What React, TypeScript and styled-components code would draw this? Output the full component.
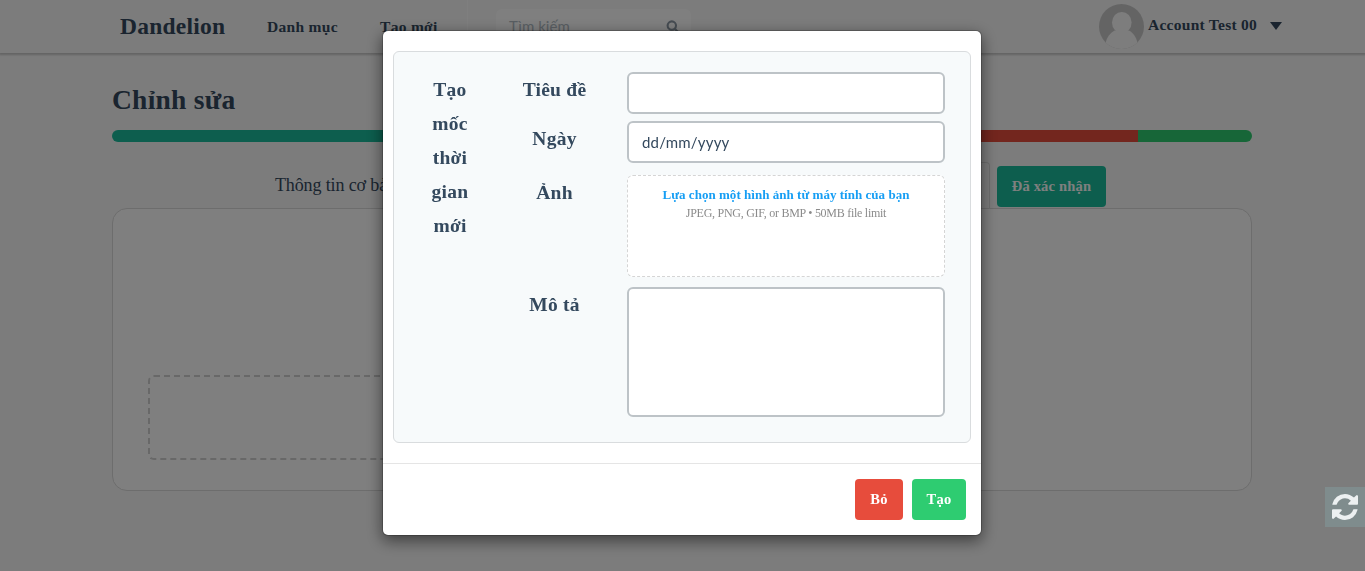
import React from "react";
import styled, { createGlobalStyle } from "styled-components";

const Global = createGlobalStyle`
  * { box-sizing: border-box; }
  html, body { margin: 0; height: 100%; overflow: hidden; }
  body {
    background: #f9f9f9;
    color: #34495e;
    font-family: "Liberation Serif", "Times New Roman", serif;
    font-size: 18px;
    line-height: 31px;
  }
`;

const Page = styled.div`
  height: 571px;
  overflow: hidden;
`;

const Navbar = styled.nav`
  height: 53px;
  background: #f8f8f8;
  box-shadow: 0 1px 2px 1px rgba(0, 0, 0, 0.2);
  display: flex;
  padding-left: 120px;
  padding-right: 83px;
  font-weight: bold;
`;

const Brand = styled.div`
  width: 147px;
  font-size: 23.5px;
  line-height: 53px;
  letter-spacing: 0.25px;
`;

const NavItem = styled.div<{ $width: number }>`
  width: ${(p) => p.$width}px;
  font-size: 15.5px;
  line-height: 54px;
  letter-spacing: 0.3px;
  white-space: nowrap;
`;

const SearchSlot = styled.div`
  border-left: 1px solid #fff;
  padding: 9px 0 0 29px;
  flex: 1;
`;

const SearchBox = styled.div`
  width: 195px;
  height: 35px;
  margin-left: -1px;
  border-radius: 6px;
  background: #fff;
  padding: 0 12px 0 13px;
  display: flex;
  align-items: center;
  justify-content: space-between;
  font: 15px/33px Lato, sans-serif;
  letter-spacing: 0.05px;
  color: #b2bcc5;
`;

const Account = styled.div`
  display: flex;
  font-size: 15.5px;
  line-height: 50px;
  letter-spacing: 0.27px;
  padding-top: 4px;
`;

const AccountName = styled.span`
  width: 110px;
  margin: -4px 12px 0 4px;
  white-space: nowrap;
`;

const Caret = styled.span`
  margin-top: 18px;
  width: 12px;
  height: 8px;
  border: 6px solid transparent;
  border-top: 8px solid #34495e;
  border-bottom: 0;
`;

const Container = styled.main`
  width: 1140px;
  margin: 0 0 0 112px;
`;

const Title = styled.h1`
  margin: 0;
  height: 77px;
  padding-top: 27px;
  font-size: 27.5px;
  line-height: 40px;
  letter-spacing: 0.25px;
  font-weight: bold;
`;

const Progress = styled.div`
  display: flex;
  height: 12px;
  border-radius: 32px;
  overflow: hidden;
`;

const Segment = styled.div<{ $color: string; $width: number }>`
  width: ${(p) => p.$width}px;
  background: ${(p) => p.$color};
`;

const Tabs = styled.div`
  height: 66px;
  padding: 20px 146px 0 149px;
  display: flex;
  justify-content: flex-end;
`;

const Tab = styled.div<{ $active?: boolean }>`
  flex: 1;
  height: 47px;
  padding: 7px 13px;
  border: 1px solid ${(p) => (p.$active ? "#ddd" : "transparent")};
  border-bottom: 0;
  border-radius: 4px 4px 0 0;
  font-size: 18px;
  letter-spacing: -0.13px;
`;

const Button = styled.button<{ $color: string; $width: number }>`
  width: ${(p) => p.$width}px;
  height: 41px;
  padding: 0;
  border: 0;
  border-radius: 4px;
  background: ${(p) => p.$color};
  color: #fff;
  font: bold 14.5px/21px "Liberation Serif", serif;
  letter-spacing: 0.2px;
`;

const TabAction = styled.div`
  margin: 4px 0 0 7px;
  line-height: 0;
`;

const Card = styled.section`
  height: 283px;
  border: 1px solid #dadada;
  border-radius: 15px;
  background: #fff;
  padding: 166px 35px 0;
`;

const DropZone = styled.div`
  width: 534px;
  height: 85px;
  border: 2px dashed #d0d0d0;
  border-radius: 6px;
`;

const Backdrop = styled.div`
  position: fixed;
  inset: 0;
  background: rgba(0, 0, 0, 0.5);
`;

const Modal = styled.div`
  width: 600px;
  margin: 30px 0 0 382px;
  background: #fff;
  background-clip: padding-box;
  border: 1px solid rgba(0, 0, 0, 0.2);
  border-radius: 6px;
  box-shadow: 0 5px 15px rgba(0, 0, 0, 0.5);
`;

const ModalBody = styled.div`
  padding: 20px 10px;
`;

const Panel = styled.div`
  height: 392px;
  border: 1px solid #d9dcde;
  border-radius: 6px;
  background: #f7fafb;
  padding: 20px 25px;
  display: grid;
  grid-template-columns: 64px 144px 318px;
  font-size: 19.5px;
  font-weight: bold;
  line-height: 34px;
  letter-spacing: 0.25px;
  text-align: center;
`;

const PanelTitle = styled.div`
  padding: 1px 11px 0 9px;
`;

const Fields = styled.div`
  grid-column: 2 / 4;
`;

const Row = styled.div<{ $gap: number }>`
  display: grid;
  grid-template-columns: 144px 318px;
  margin-bottom: ${(p) => p.$gap}px;
`;

const Label = styled.label`
  padding: 1px 1px 0 0;
`;

const Input = styled.div<{ $height: number }>`
  height: ${(p) => p.$height}px;
  border: 2px solid #bdc3c7;
  border-radius: 6px;
  background: #fff;
  padding: 0 13px;
  text-align: left;
  font: 15px/38px Lato, sans-serif;
  letter-spacing: 0.2px;
`;

const Upload = styled.div`
  height: 102px;
  border: 1px dashed #d5d5d5;
  border-radius: 6px;
  background: #fff;
  padding-top: 10px;
`;

const UploadTitle = styled.div`
  color: #169ef4;
  font-size: 13px;
  line-height: 18px;
  letter-spacing: 0.03px;
`;

const UploadHint = styled.div`
  color: #8b8b8b;
  font-size: 12px;
  font-weight: normal;
  line-height: 18px;
  letter-spacing: -0.27px;
`;

const ModalFooter = styled.div`
  height: 72px;
  border-top: 1px solid #e5e5e5;
  padding: 15px;
  display: flex;
  justify-content: flex-end;
  gap: 9px;
`;

const Refresh = styled.button`
  position: fixed;
  right: 0;
  top: 487px;
  width: 40px;
  height: 40px;
  padding: 0;
  border: 0;
  background: #7f8c8d;
  color: #ecf0f1;
  display: flex;
  align-items: center;
  justify-content: center;
`;

const Avatar = () => (
  <svg width="45" height="45" viewBox="0 0 45 45">
    <defs>
      <clipPath id="round"><circle cx="22.5" cy="22.5" r="22.5" /></clipPath>
    </defs>
    <g clipPath="url(#round)">
      <rect width="45" height="45" fill="#c9c9c9" />
      <ellipse cx="22.8" cy="18.6" rx="9.8" ry="10.6" fill="#fbfbfb" />
      <path d="M6.500 39C8 33 11 29 15.500 26.500H30C34.500 29 37 33 38.500 39L36 46H9Z" fill="#fbfbfb" />
    </g>
  </svg>
);

const SearchIcon = () => (
  <svg width="13" height="13" viewBox="0 0 13 13" fill="none" stroke="#8c98a4" strokeWidth="2.1">
    <circle cx="5.8" cy="5.6" r="4.2" />
    <path d="M8.600 8.600L12 12" />
  </svg>
);

const RefreshIcon = () => (
  <svg width="26" height="26" viewBox="0 0 1536 1536" fill="currentColor">
    <path d="M1511 928q0 5-1 7-64 268-268 434.500t-478 166.500q-146 0-282.500-55t-243.500-157l-129 129q-19 19-45 19t-45-19-19-45v-448q0-26 19-45t45-19h448q26 0 45 19t19 45-19 45l-137 137q71 66 161 102t187 36q134 0 250-65t186-179q11-17 53-117 8-23 30-23h192q13 0 22.500 9.500t9.500 22.500zm25-800v448q0 26-19 45t-45 19h-448q-26 0-45-19t-19-45 19-45l138-138q-148-137-349-137-134 0-250 65t-186 179q-11 17-53 117-8 23-30 23h-199q-13 0-22.500-9.500t-9.500-22.500v-7q65-268 270-434.500t480-166.500q146 0 284 55.500t245 156.500l130-129q19-19 45-19t45 19 19 45z" />
  </svg>
);

export default function App() {
  return (
    <>
      <Global />
      <Page>
        <Navbar>
          <Brand>Dandelion</Brand>
          <NavItem $width={113}>Danh mục</NavItem>
          <NavItem $width={87}>Tạo mới</NavItem>
          <SearchSlot>
            <SearchBox>Tìm kiếm<SearchIcon /></SearchBox>
          </SearchSlot>
          <Account>
            <Avatar />
            <AccountName>Account Test 00</AccountName>
            <Caret />
          </Account>
        </Navbar>
        <Container>
          <Title>Chỉnh sửa</Title>
          <Progress>
            <Segment $color="#1abc9c" $width={456} />
            <Segment $color="#e74c3c" $width={570} />
            <Segment $color="#2ecc71" $width={114} />
          </Progress>
          <Tabs>
            <Tab>Thông tin cơ bản</Tab>
            <Tab $active />
            <TabAction>
              <Button $color="#1abc9c" $width={109}>Đã xác nhận</Button>
            </TabAction>
          </Tabs>
          <Card><DropZone /></Card>
        </Container>
      </Page>
      <Backdrop>
        <Modal>
          <ModalBody>
            <Panel>
              <PanelTitle>Tạo mốc thời gian mới</PanelTitle>
              <Fields>
                <Row $gap={7}><Label>Tiêu đề</Label><Input $height={42} /></Row>
                <Row $gap={12}><Label>Ngày</Label><Input $height={42}>dd/mm/yyyy</Input></Row>
                <Row $gap={10}>
                  <Label>Ảnh</Label>
                  <Upload>
                    <UploadTitle>Lựa chọn một hình ảnh từ máy tính của bạn</UploadTitle>
                    <UploadHint>JPEG, PNG, GIF, or BMP • 50MB file limit</UploadHint>
                  </Upload>
                </Row>
                <Row $gap={0}><Label>Mô tả</Label><Input $height={130} /></Row>
              </Fields>
            </Panel>
          </ModalBody>
          <ModalFooter>
            <Button $color="#e74c3c" $width={48}>Bỏ</Button>
            <Button $color="#2ecc71" $width={54}>Tạo</Button>
          </ModalFooter>
        </Modal>
      </Backdrop>
      <Refresh><RefreshIcon /></Refresh>
    </>
  );
}
